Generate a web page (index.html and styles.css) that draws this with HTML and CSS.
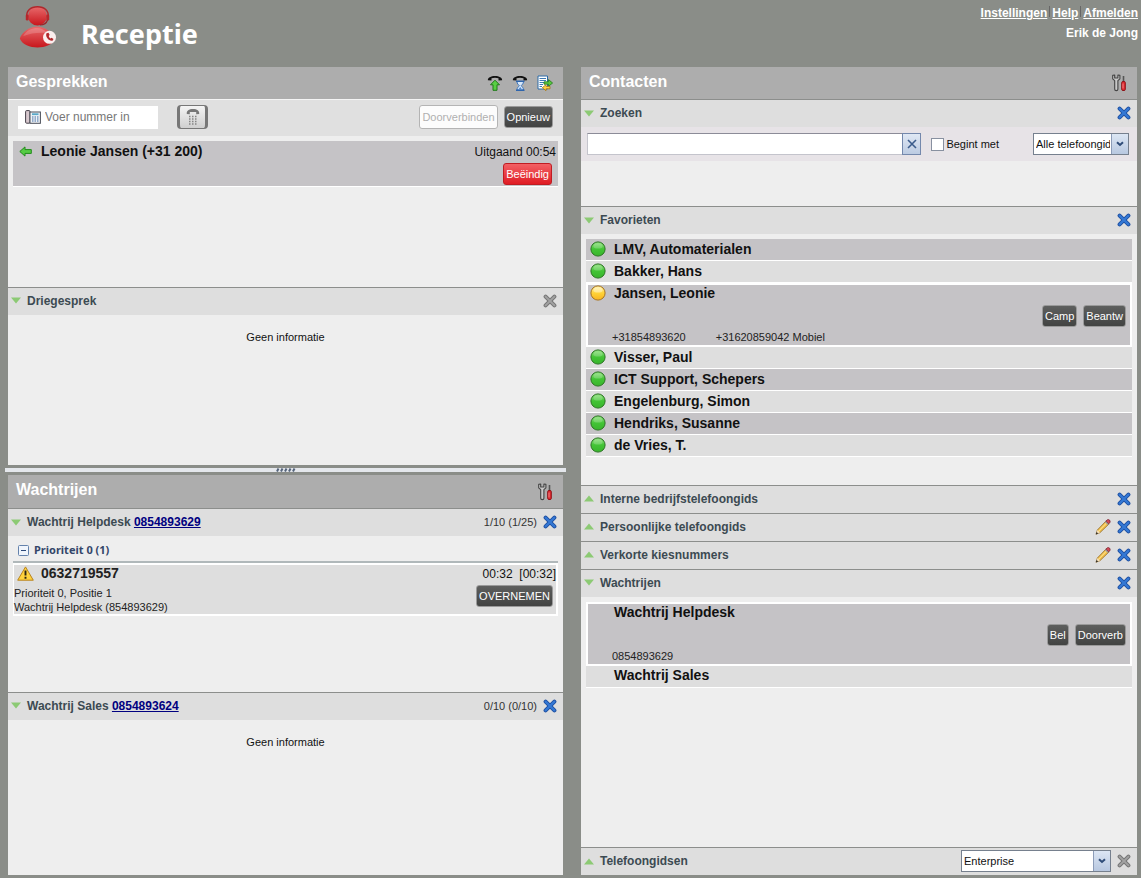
FILE: index.html
```html
<!DOCTYPE html>
<html lang="nl">
<head>
<meta charset="utf-8">
<title>Receptie</title>
<link rel="stylesheet" href="styles.css">
</head>
<body>
<svg class="defs" aria-hidden="true">
  <defs>
    <linearGradient id="red" x1="0" y1="0" x2="0" y2="1"><stop offset="0" stop-color="#e86a6c"/><stop offset="1" stop-color="#c8161c"/></linearGradient>
    <linearGradient id="green" x1="0" y1="0" x2="0" y2="1"><stop offset="0" stop-color="#8ee07c"/><stop offset=".5" stop-color="#43c436"/><stop offset="1" stop-color="#38b42c"/></linearGradient>
    <linearGradient id="amber" x1="0" y1="0" x2="0" y2="1"><stop offset="0" stop-color="#fff0a0"/><stop offset=".5" stop-color="#ffd338"/><stop offset="1" stop-color="#f8b420"/></linearGradient>
    <symbol id="x" viewBox="0 0 14 14">
      <path d="M2.6 2.6 11.4 11.4M11.4 2.6 2.6 11.4" stroke="#1d4d9e" stroke-width="4" stroke-linecap="round"/>
      <path d="M2.6 2.6 11.4 11.4M11.4 2.6 2.6 11.4" stroke="#3478d4" stroke-width="2.2" stroke-linecap="round"/>
    </symbol>
    <symbol id="x-off" viewBox="0 0 14 14">
      <path d="M2.6 2.6 11.4 11.4M11.4 2.6 2.6 11.4" stroke="#777" stroke-width="4" stroke-linecap="round"/>
      <path d="M2.6 2.6 11.4 11.4M11.4 2.6 2.6 11.4" stroke="#a2a2a2" stroke-width="2" stroke-linecap="round"/>
    </symbol>
    <symbol id="down" viewBox="0 0 10 7"><path d="M0 .5h10L5 6.5z" fill="#8cca74"/></symbol>
    <symbol id="up" viewBox="0 0 10 7"><path d="M0 6.5h10L5 .5z" fill="#8cca74"/></symbol>
    <symbol id="tools" viewBox="0 0 16 18">
      <path d="M1.700 1.200v3.600l2 1.900v8.600c0 1.800 3.200 1.800 3.200 0V6.700l2-1.900V1.200L6.900 1v3H3.700V1z" fill="#c9c9c9" stroke="#444" stroke-width="1.100" stroke-linejoin="round"/>
      <path d="M12.500 2v6" stroke="#555" stroke-width="1.600"/>
      <rect x="10.700" y="7.500" width="3.600" height="9" rx="1.200" fill="#e02a30" stroke="#8c1218"/>
      <path d="M12 9.500v5" stroke="#ff9c9c" stroke-width=".8"/>
    </symbol>
    <symbol id="pencil" viewBox="0 0 16 16">
      <path d="M1 15.200 2.400 11 11.200 1.900l3 2.800L5 13.600z" fill="#f3c04a" stroke="#98702c" stroke-width=".9" stroke-linejoin="round"/>
      <path d="M3.600 12.200 12 3.500" stroke="#ffe79a"/>
      <path d="M1 15.200 2.400 11 5 13.600z" fill="#f5dfb8"/>
      <path d="m.8 15.400.8-2.300 1.500 1.400z" fill="#222"/>
      <path d="M10.800 2.200 12.400.8c1.500-.8 3.300.8 2.600 2.500l-1.300 1.500z" fill="#d44a58" stroke="#7a2836" stroke-width=".8"/>
      <path d="m10.300 2.700 3 2.900" stroke="#8b8fa4" stroke-width="1.100"/>
    </symbol>
    <symbol id="dot-green" viewBox="0 0 16 16"><circle cx="8" cy="8" r="7.100" fill="url(#green)" stroke="#2c7424"/><ellipse cx="8" cy="4.900" rx="4.600" ry="2.700" fill="#fff" opacity=".2"/></symbol>
    <symbol id="dot-amber" viewBox="0 0 16 16"><circle cx="8" cy="8" r="7.100" fill="url(#amber)" stroke="#a87420"/><ellipse cx="8" cy="4.900" rx="4.600" ry="2.700" fill="#fff" opacity=".4"/></symbol>
    <symbol id="handset" viewBox="0 0 16 6"><path d="M.9 5.200C.5 2.500 4 .9 8 .9s7.500 1.600 7.100 4.300l-3.600.3V3.200C9.500 2.500 6.500 2.500 4.500 3.200v2.300z" fill="#111"/></symbol>
    <symbol id="chev" viewBox="0 0 8 6"><path d="M1 1.200 4 4l3-2.800" stroke="#2f4c78" stroke-width="2" fill="none"/></symbol>
  </defs>
</svg>

<div class="app">
  <header class="top">
    <div class="brand">
      <svg class="logo" viewBox="0 0 38 42" aria-hidden="true">
        <path d="M.8 32.500C3 25.500 11 20.500 18 20.500s15 5 18.500 12C34 38.500 26 41.500 18.500 41.500S3 38.500.8 32.500z" fill="url(#red)"/>
        <path d="M4 30c4-6 9-8 14-8 4 0 8 2 11 5-9-1-17 0-25 3z" fill="#fff" opacity=".18"/>
        <circle cx="18.500" cy="10" r="9.500" fill="url(#red)"/>
        <path d="M8 12C6.500 5 11.500.8 18.500.8S30.500 5 29 12" fill="none" stroke="#b0282c" stroke-width="1.500"/>
        <rect x="6.800" y="8.500" width="2.800" height="6" rx="1.300" fill="#b8262b"/>
        <rect x="27.400" y="8.500" width="2.800" height="6" rx="1.300" fill="#b8262b"/>
        <path d="M28.500 14c-1 3.500-3.500 4.800-7.500 5" fill="none" stroke="#9c2428" stroke-width="1.200"/>
        <circle cx="30.500" cy="31.300" r="6.500" fill="#fbeeee"/>
        <path d="M27.500 27.200c-1.500 3 2 8 6 7.500l1-1.600-2-1.300-1 .7c-1-.5-1.700-1.700-1.700-2.700l.9-.8-1.200-2.300z" fill="#b3282c"/>
      </svg>
      <h1 class="brand-name">Receptie</h1>
    </div>
    <div class="account">
      <nav class="links"><a href="#">Instellingen</a><i class="bar"></i><a href="#">Help</a><i class="bar"></i><a href="#">Afmelden</a></nav>
      <span class="user">Erik de Jong</span>
    </div>
  </header>

  <main class="columns">
    <div class="left">
      <section class="panel calls">
        <div class="title">
          <h2>Gesprekken</h2>
          <div class="title-tools">
            <button class="icon" aria-label="Opnemen"><svg width="16" height="16" viewBox="0 0 16 16"><use href="#handset" width="16" height="6"/><path d="M8 5.200 12.500 9.800H10v5.500H6V9.800H3.500z" fill="#58cf43" stroke="#1f7a18"/></svg></button>
            <button class="icon" aria-label="In de wacht"><svg width="16" height="16" viewBox="0 0 16 16"><use href="#handset" width="16" height="6"/><path d="M5 6.500h6.500c0 2.500-1.500 3-2.300 4.200.8 1.200 2.300 2 2.300 4.300H5c0-2.300 1.500-3.100 2.300-4.300C6.500 9.500 5 9 5 6.500z" fill="#d8e8fa" stroke="#3b74bc"/><path d="M4 6.300h8.500M4 15.200h8.500" stroke="#2f65ac" stroke-width="1.400"/><path d="M6.600 14.300 8.250 12l1.650 2.300z" fill="#4a86d0"/></svg></button>
            <button class="icon" aria-label="Doorsturen"><svg width="16" height="16" viewBox="0 0 16 16"><path d="M1 1h9.500v13H1z" fill="#fff" stroke="#2d6aa6"/><path d="M2.500 3.500H9M2.500 5.500H9M2.500 7.500H8M2.500 9.500H6M2.500 11.500H5" stroke="#3d7ab4"/><path d="M7 6.800h4.500V4.600L15.600 8l-4.100 3.300V9.200H7z" fill="#58c840" stroke="#237a1a" stroke-width=".8"/><path d="M13 11.400H9V9.700l-3.700 3 3.700 3v-1.900h4z" fill="#ffd244" stroke="#a47412" stroke-width=".8"/></svg></button>
          </div>
        </div>
        <div class="dial">
          <label class="number">
            <svg width="16" height="14" viewBox="0 0 16 14" aria-hidden="true"><rect x=".6" y=".6" width="4.400" height="12.600" rx="1" fill="#d8c8ce" stroke="#46404a"/><rect x="5" y="2" width="10.400" height="11.300" fill="#eef2f6" stroke="#4a4e58"/><path d="M7 4.200h6.500" stroke="#58a8c8" stroke-width="1.800"/><path d="M7 7h1.500M9.500 7H11M12 7h1.500M7 9h1.500M9.500 9H11M12 9h1.500M7 11h1.500M9.500 11H11M12 11h1.500" stroke="#3c68a0" stroke-width="1.100"/></svg>
            <input type="text" placeholder="Voer nummer in" aria-label="Voer nummer in">
          </label>
          <button class="keypad" aria-label="Toetsenblok"><svg width="14" height="18" viewBox="0 0 14 18"><path d="M.8 6C.4 2.500 3 1 7 1s6.600 1.500 6.200 5l-3 .2V4.100H3.800v2.100z" fill="#777"/><path d="M3 8.500h8M3 11h8M3 13.500h8M3 16h8" stroke="#858585" stroke-width="1.300" stroke-dasharray="1.500 1.500"/></svg></button>
          <div class="dial-actions">
            <button class="btn btn-off" disabled>Doorverbinden</button>
            <button class="btn">Opnieuw</button>
          </div>
        </div>
        <div class="body">
          <article class="call">
            <svg class="call-arrow" width="13" height="11" viewBox="0 0 13 11" aria-hidden="true"><path d="M.8 5.500 6 .9v2.700h6.300v3.800H6v2.700z" fill="#55cc44" stroke="#238a1c"/></svg>
            <strong class="name">Leonie Jansen (+31 200)</strong>
            <div class="call-side"><span class="time">Uitgaand 00:54</span><button class="btn btn-red">Beëindig</button></div>
          </article>
        </div>
        <div class="bar-head">
          <button class="icon" aria-label="Inklappen"><svg width="10" height="7"><use href="#down"/></svg></button>
          <h3>Driegesprek</h3>
          <button class="icon end" aria-label="Sluiten" disabled><svg width="14" height="14"><use href="#x-off"/></svg></button>
        </div>
        <div class="body"><p class="empty">Geen informatie</p></div>
      </section>

      <div class="splitter"><svg width="20" height="4" viewBox="0 0 20 4"><path d="M1 3.500 2.500.500M5 3.500 6.500.500M9 3.500 10.500.500M13 3.500 14.500.500M17 3.500 18.500.500" stroke="#56657c" stroke-width="2"/></svg></div>

      <section class="panel queues">
        <div class="title">
          <h2>Wachtrijen</h2>
          <div class="title-tools"><button class="icon" aria-label="Opties"><svg width="16" height="18"><use href="#tools"/></svg></button></div>
        </div>
        <div class="bar-head">
          <button class="icon" aria-label="Inklappen"><svg width="10" height="7"><use href="#down"/></svg></button>
          <h3>Wachtrij Helpdesk <a href="#">0854893629</a></h3>
          <span class="count end">1/10 (1/25)</span>
          <button class="icon" aria-label="Sluiten"><svg width="14" height="14"><use href="#x"/></svg></button>
        </div>
        <div class="body">
          <div class="group">
            <button class="icon" aria-label="Groep inklappen"><svg width="11" height="11" viewBox="0 0 11 11"><rect x=".5" y=".5" width="10" height="10" rx="1" fill="#f0f5fc" stroke="#6482ac"/><path d="M3 5.500h5" stroke="#2c4878"/></svg></button>
            <h4>Prioriteit 0 (1)</h4>
          </div>
          <article class="queued">
            <div class="queued-info">
              <div class="queued-name">
                <svg width="17" height="15" viewBox="0 0 17 15" aria-hidden="true"><path d="M8.500.9 16.300 14.200H.7z" fill="#ffd23c" stroke="#b8821c" stroke-linejoin="round"/><path d="M8.500 4.500v5M8.500 10.800v1.900" stroke="#2c2410" stroke-width="1.900"/></svg>
                <strong class="name">0632719557</strong>
              </div>
              <span>Prioriteit 0, Positie 1</span>
              <span>Wachtrij Helpdesk (854893629)</span>
            </div>
            <div class="queued-side"><span class="time">00:32 &nbsp;[00:32]</span><button class="btn">OVERNEMEN</button></div>
          </article>
        </div>
        <div class="bar-head">
          <button class="icon" aria-label="Inklappen"><svg width="10" height="7"><use href="#down"/></svg></button>
          <h3>Wachtrij Sales <a href="#">0854893624</a></h3>
          <span class="count end">0/10 (0/10)</span>
          <button class="icon" aria-label="Sluiten"><svg width="14" height="14"><use href="#x"/></svg></button>
        </div>
        <div class="body"><p class="empty">Geen informatie</p></div>
      </section>
    </div>

    <section class="panel">
      <div class="title">
        <h2>Contacten</h2>
        <div class="title-tools"><button class="icon" aria-label="Opties"><svg width="16" height="18"><use href="#tools"/></svg></button></div>
      </div>
      <div class="bar-head">
        <button class="icon" aria-label="Inklappen"><svg width="10" height="7"><use href="#down"/></svg></button>
        <h3>Zoeken</h3>
        <button class="icon end" aria-label="Sluiten"><svg width="14" height="14"><use href="#x"/></svg></button>
      </div>
      <div class="search-body">
        <form class="search">
          <div class="search-field"><input type="text" aria-label="Zoeken"><button type="button" class="clear" aria-label="Wissen"><svg width="10" height="10" viewBox="0 0 10 10"><path d="m1 1 8 8M9 1 1 9" stroke="#3c5c8c" stroke-width="1.600"/></svg></button></div>
          <label class="check"><input type="checkbox">Begint met</label>
          <div class="combo combo-dir"><select aria-label="Telefoongids"><option>Alle telefoongidsen</option></select><span class="combo-btn"><svg width="8" height="6"><use href="#chev"/></svg></span></div>
        </form>
      </div>

      <div class="bar-head">
        <button class="icon" aria-label="Inklappen"><svg width="10" height="7"><use href="#down"/></svg></button>
        <h3>Favorieten</h3>
        <button class="icon end" aria-label="Sluiten"><svg width="14" height="14"><use href="#x"/></svg></button>
      </div>
      <div class="body">
        <ul class="list">
          <li class="row dark"><svg width="16" height="16"><use href="#dot-green"/></svg><strong class="name">LMV, Automaterialen</strong></li>
          <li class="row"><svg width="16" height="16"><use href="#dot-green"/></svg><strong class="name">Bakker, Hans</strong></li>
          <li class="open">
            <div class="open-name"><svg width="16" height="16"><use href="#dot-amber"/></svg><strong class="name">Jansen, Leonie</strong></div>
            <div class="open-actions"><button class="btn">Camp</button><button class="btn">Beantw</button></div>
            <div class="phones"><span>+31854893620</span><span>+31620859042 Mobiel</span></div>
          </li>
          <li class="row"><svg width="16" height="16"><use href="#dot-green"/></svg><strong class="name">Visser, Paul</strong></li>
          <li class="row dark"><svg width="16" height="16"><use href="#dot-green"/></svg><strong class="name">ICT Support, Schepers</strong></li>
          <li class="row"><svg width="16" height="16"><use href="#dot-green"/></svg><strong class="name">Engelenburg, Simon</strong></li>
          <li class="row dark"><svg width="16" height="16"><use href="#dot-green"/></svg><strong class="name">Hendriks, Susanne</strong></li>
          <li class="row"><svg width="16" height="16"><use href="#dot-green"/></svg><strong class="name">de Vries, T.</strong></li>
        </ul>
      </div>

      <div class="bar-head">
        <button class="icon" aria-label="Uitklappen"><svg width="10" height="7"><use href="#up"/></svg></button>
        <h3>Interne bedrijfstelefoongids</h3>
        <button class="icon end" aria-label="Sluiten"><svg width="14" height="14"><use href="#x"/></svg></button>
      </div>
      <div class="bar-head">
        <button class="icon" aria-label="Uitklappen"><svg width="10" height="7"><use href="#up"/></svg></button>
        <h3>Persoonlijke telefoongids</h3>
        <button class="icon end" aria-label="Bewerken"><svg width="16" height="16"><use href="#pencil"/></svg></button>
        <button class="icon" aria-label="Sluiten"><svg width="14" height="14"><use href="#x"/></svg></button>
      </div>
      <div class="bar-head">
        <button class="icon" aria-label="Uitklappen"><svg width="10" height="7"><use href="#up"/></svg></button>
        <h3>Verkorte kiesnummers</h3>
        <button class="icon end" aria-label="Bewerken"><svg width="16" height="16"><use href="#pencil"/></svg></button>
        <button class="icon" aria-label="Sluiten"><svg width="14" height="14"><use href="#x"/></svg></button>
      </div>
      <div class="bar-head">
        <button class="icon" aria-label="Inklappen"><svg width="10" height="7"><use href="#down"/></svg></button>
        <h3>Wachtrijen</h3>
        <button class="icon end" aria-label="Sluiten"><svg width="14" height="14"><use href="#x"/></svg></button>
      </div>
      <div class="body">
        <ul class="list plain">
          <li class="open">
            <div class="open-name"><strong class="name">Wachtrij Helpdesk</strong></div>
            <div class="open-actions"><button class="btn">Bel</button><button class="btn">Doorverb</button></div>
            <div class="phones"><span>0854893629</span></div>
          </li>
          <li class="row"><strong class="name">Wachtrij Sales</strong></li>
        </ul>
      </div>
      <div class="bar-head">
        <button class="icon" aria-label="Uitklappen"><svg width="10" height="7"><use href="#up"/></svg></button>
        <h3>Telefoongidsen</h3>
        <div class="combo combo-src end"><select aria-label="Telefoongidsen"><option>Enterprise</option></select><span class="combo-btn"><svg width="8" height="6"><use href="#chev"/></svg></span></div>
        <button class="icon" aria-label="Sluiten" disabled><svg width="14" height="14"><use href="#x-off"/></svg></button>
      </div>
    </section>
  </main>
</div>
</body>
</html>
```

FILE: styles.css
```css
* { box-sizing: border-box; }

body {
  margin: 0;
  background: #8a8d88;
  color: #111;
  font: 11px/14px "Liberation Sans", Arial, sans-serif;
}

h1, h2, h3, h4, p, ul { margin: 0; padding: 0; }
ul { list-style: none; }
svg { display: block; flex: none; fill: none; }
button, input, select { font: inherit; color: inherit; margin: 0; }

.defs { position: absolute; width: 0; height: 0; }

.app { min-height: 100vh; display: flex; flex-direction: column; }

/* Header */
.top { display: flex; justify-content: space-between; height: 67px; padding: 6px 3px 0 19px; }
.brand { display: flex; gap: 24px; }
.logo { width: 38px; height: 42px; }
.brand-name { padding-top: 8px; color: #fff; font: bold 27px/40px "Noto Sans", "Open Sans", sans-serif; }
.account { display: flex; flex-direction: column; align-items: flex-end; gap: 6px; color: #fff; font-size: 12px; font-weight: bold; }
.links { display: flex; }
.links a { color: #fff; }
.bar { width: 1px; height: 11px; margin: 0 2px; background: #666; }

/* Page columns */
.columns { flex: 1; display: grid; grid-template-columns: 555fr 556fr; gap: 18px; padding: 0 4px 3px 8px; }
.left { display: flex; flex-direction: column; min-width: 0; }
.panel { flex: 1 1 0; display: flex; flex-direction: column; min-width: 0; background: #eee; }
.calls { flex-grow: 199; }
.queues { flex-grow: 200; }
.splitter { display: flex; justify-content: center; align-items: center; height: 4px; margin: 3px -3px; background: #e4e7ec; }

.title { display: flex; justify-content: space-between; align-items: center; height: 32px; padding: 0 10px 3px 8px; background: #adadad; }
.queues .title { height: 33px; }
.title h2 { color: #fff; font-size: 16px; line-height: 20px; }
.title-tools { display: flex; gap: 9px; padding-top: 3px; }
.icon { display: block; flex: none; padding: 0; border: 0; background: none; }

.bar-head { display: flex; align-items: center; height: 28px; flex: none; gap: 6px; padding: 0 6px 1px 3px; border-top: 1px solid #8c8e8c; background: #dedede; }
.bar-head h3 { color: #3c4a52; font-size: 12px; line-height: 16px; }
.bar-head a { color: #000080; }
.bar-head .end { margin-left: auto; }
.count { color: #333; }

.body { flex: 1 1 0; padding: 5px; }
.empty { padding-top: 10px; text-align: center; }
.name { font-size: 14px; line-height: 20px; }
.time { font-size: 12px; line-height: 16px; }

/* Buttons */
.btn { height: 22px; padding: 0 2px; border: 1px solid #9a9a9a; border-radius: 3px; background: linear-gradient(#5e5f5e, #424342); color: #fff; white-space: nowrap; }
.btn-off { height: 24px; background: #fcfcfc; border-color: #b4b4b4; color: #b0b0b0; }
.btn-red { border-color: #c01c22; background: linear-gradient(#f26064, #e01c24); }

/* Dial bar */
.dial { display: flex; align-items: center; height: 37px; padding: 0 10px 2px; border-top: 1px solid #f4f4f4; background: #e0e0e0; }
.number { display: flex; align-items: center; gap: 4px; width: 140px; height: 23px; padding-left: 7px; background: #fff; }
.number input { flex: 1; min-width: 0; padding: 0; border: 0; outline: 0; background: none; font-size: 12px; }
.number input::placeholder { color: #777; opacity: 1; }
.keypad { display: flex; justify-content: center; align-items: center; width: 31px; height: 24px; margin-left: 19px; padding: 0; border: solid #777; border-width: 1px 3px; border-radius: 4px; background: linear-gradient(#f4f4f4, #cfcfcf); }
.dial-actions { display: flex; align-items: center; gap: 6px; margin-left: auto; }

/* Active call */
.call { display: flex; min-height: 46px; padding: 0 2px 0 6px; border-bottom: 1px solid #fff; background: #c5c3c6; }
.call-arrow { margin: 5px 9px 0 0; }
.call-side { display: flex; flex-direction: column; align-items: flex-end; gap: 3px; margin-left: auto; padding-top: 3px; }
.call-side .btn { margin-right: 4px; }

/* Queue */
.group { display: flex; align-items: center; gap: 5px; height: 22px; padding: 0 5px 2px; border-bottom: 2px solid #b0b8ba; }
.group h4 { color: #34466a; font: bold 11px/14px "Noto Sans", "DejaVu Sans", sans-serif; }
.queued { display: flex; justify-content: space-between; border: 2px solid #fff; border-left-width: 1px; background: #dedede; }
.queued-info { display: flex; flex-direction: column; color: #222; }
.queued-name { display: flex; align-items: center; gap: 7px; height: 16px; margin-bottom: 5px; padding-left: 3px; }
.queued-side { display: flex; flex-direction: column; align-items: flex-end; gap: 3px; padding-top: 1px; }
.queued-side .btn { margin-right: 3px; }

/* Search */
.search-body { flex: none; min-height: 79px; }
.search { display: flex; align-items: center; height: 34px; padding: 0 8px 0 6px; background: #e7e3e7; }
.search-field { display: flex; flex: 1; height: 22px; min-width: 0; }
.search-field input { flex: 1; min-width: 0; border: 1px solid #c4c4cc; border-top-color: #8c8c98; border-right: 0; background: #fff; }
.clear { display: flex; align-items: center; justify-content: center; width: 19px; padding: 0; border: 1px solid #7488ac; background: linear-gradient(#e0e8f4, #bccbe2); }
.check { display: flex; align-items: center; gap: 2px; margin: 0 34px 0 10px; }
.check input { appearance: none; width: 13px; height: 13px; border: 1px solid #8890a0; background: #fff; }

.combo { position: relative; height: 22px; border: 1px solid #76808e; background: #fff; }
.combo select { appearance: none; width: 100%; height: 100%; padding: 0 18px 0 2px; border: 0; border-radius: 0; background: none; }
.combo-dir { width: 96px; }
.combo-src { width: 150px; }
.combo-btn { position: absolute; top: 0; right: 0; bottom: 0; display: flex; align-items: center; justify-content: center; width: 17px; border-left: 1px solid #8c9cb8; background: linear-gradient(#dce6f4, #b8c8e0); pointer-events: none; }

/* Contact lists */
.row { display: flex; align-items: center; gap: 8px; height: 22px; padding: 0 0 2px 4px; border-bottom: 1px solid #fff; background: #dedede; }
.dark { background: #c5c3c6; }
.open { display: flex; flex-direction: column; min-height: 64px; border: 2px solid #fff; background: #c5c3c6; }
.open-name { display: flex; align-items: center; gap: 8px; height: 16px; padding-left: 2px; }
.open-actions { display: flex; justify-content: flex-end; gap: 6px; padding: 4px 4px 0 0; }
.phones { display: flex; gap: 30px; margin-top: auto; padding: 0 0 1px 24px; color: #222; }
.plain .row { padding-left: 28px; }
.plain .open-name { padding-left: 26px; }
```
